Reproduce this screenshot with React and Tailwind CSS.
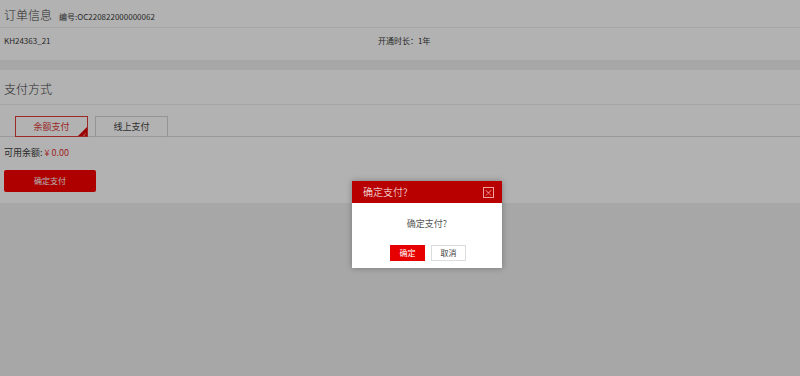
import React from 'react';

const font = { fontFamily: '"Noto Sans CJK SC", "Noto Sans", sans-serif' };

const App = () => {
  return (
    <div className="relative w-[800px] h-[376px] overflow-hidden bg-[#efefef] text-[#3a3a3a]" style={font}>
      {/* 订单信息 */}
      <div className="bg-white h-[60px]">
        <div className="flex items-end h-[28px] px-[4px] pb-[6px] border-b border-[#ececec]">
          <span className="text-[12px] leading-none font-light">订单信息</span>
          <span className="ml-[7px] text-[8px] leading-none">编号:OC220822000000062</span>
        </div>
        <div className="flex items-center h-[26px] px-[4px] text-[8px]">
          <span className="w-[374px]">KH24363_21</span>
          <span>开通时长：1年</span>
        </div>
      </div>

      {/* 支付方式 */}
      <div className="bg-white mt-[10px] h-[133px]">
        <div className="flex items-center h-[35px] px-[4px] border-b border-[#ececec]">
          <span className="text-[12px] leading-none mt-[3px] font-light">支付方式</span>
        </div>
        <div className="flex gap-[7px] pl-[15px] pt-[11px] border-b border-[#dcdcdc]">
          <div className="relative w-[73px] h-[21px] -mb-px border border-[#e03a3a] bg-white flex items-center justify-center text-[9px] text-[#e03a3a]">
            余额支付
            <div className="absolute right-0 bottom-0 w-0 h-0 border-l-[9px] border-l-transparent border-b-[9px] border-b-[#e00000]"></div>
            <span className="absolute right-[1px] bottom-[0px] text-[4px] leading-none text-white">✓</span>
          </div>
          <div className="w-[73px] h-[21px] -mb-px border border-[#d6d6d6] border-b-[#dcdcdc] bg-white flex items-center justify-center text-[9px] text-[#444]">
            线上支付
          </div>
        </div>
        <div className="px-[4px] pt-[10px] text-[9px] leading-[12px]">
          可用余额: <span className="text-[#e53333]">¥ 0.00</span>
        </div>
        <div className="px-[4px] pt-[11px]">
          <button className="w-[92px] h-[22px] bg-[#fb0000] rounded-[2px] text-white text-[8px] flex items-center justify-center">
            确定支付
          </button>
        </div>
      </div>

      {/* 遮罩 */}
      <div className="absolute inset-0 bg-black/30"></div>

      {/* 弹窗 */}
      <div className="absolute left-[352px] top-[181px] w-[150px] h-[87px] bg-white shadow-[0_0_6px_rgba(0,0,0,0.3)]">
        <div className="flex items-center justify-between h-[22px] bg-[#b80000] pl-[11px] pr-[8px]">
          <span className="text-[10px] text-white leading-none font-light">确定支付?</span>
          <span className="w-[11px] h-[11px] border border-[#f0a0a0] flex items-center justify-center text-[#f0a0a0] text-[9px] leading-none">×</span>
        </div>
        <div className="text-center text-[9px] text-[#555] pt-[15px] leading-[12px]">确定支付?</div>
        <div className="flex justify-center gap-[6px] mt-[15px] pl-[2px]">
          <button className="w-[35px] h-[16px] bg-[#e60000] text-white text-[8px] leading-none flex items-center justify-center">确定</button>
          <button className="w-[35px] h-[16px] bg-white border border-[#dcdcdc] text-[#444] text-[8px] leading-none flex items-center justify-center">取消</button>
        </div>
      </div>
    </div>
  );
};

export default App;
